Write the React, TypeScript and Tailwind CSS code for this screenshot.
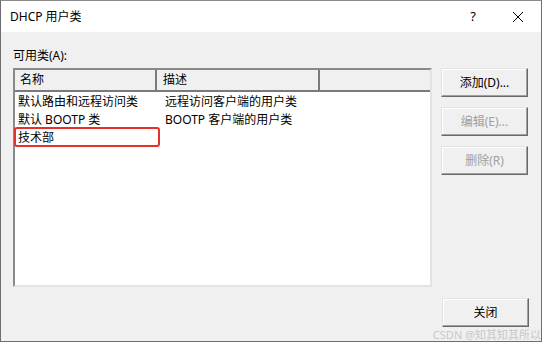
const rows = [
	{ name: '默认路由和远程访问类', desc: '远程访问客户端的用户类' },
	{ name: '默认 BOOTP 类', desc: 'BOOTP 客户端的用户类' },
	{ name: '技术部', desc: '' },
];

// classic 3D push button
const Btn = ({ label, disabled }: { label: string; disabled?: boolean }) => (
	<button
		className={`w-[87px] h-[29px] bg-[#f0f0f0] border border-t-[#e3e3e3] border-l-[#e3e3e3] border-r-[#696969] border-b-[#696969] shadow-[inset_-1px_-1px_0_#a0a0a0,inset_1px_1px_0_#ffffff] text-[12px] ${
			disabled ? 'text-[#a0a0a0]' : 'text-black'
		}`}
	>
		{label}
	</button>
);

export default function App() {
	return (
		<div
			className="w-[542px] h-[344px] bg-white text-black"
			style={{ fontFamily: '"Noto Sans", "Noto Sans CJK SC", sans-serif' }}
		>
			<div className="w-[542px] h-[342px] flex flex-col border-l border-r border-b border-t border-[#6e6e6e] border-t-[#8a8a8a] bg-[#f0f0f0]">
				{/* title bar */}
				<div className="h-[31px] bg-white flex items-center pl-[9px] shrink-0">
					<span className="text-[12px]">DHCP 用户类</span>
					<span className="ml-auto text-[13px] w-[12px] mr-[33px] text-center">?</span>
					<svg width="12" height="12" viewBox="0 0 12 12" className="mr-[17px]">
						<path d="M1 1L11 11M11 1L1 11" stroke="#000" strokeWidth="1" />
					</svg>
				</div>

				{/* body */}
				<div className="flex flex-col pt-[16px] pl-[12px] pr-[12px]">
					<div className="text-[12px] leading-[16px] mb-[4px]">可用类(A):</div>
					<div className="flex">
						{/* list view */}
						<div className="relative w-[419px] h-[219px] bg-white border-2 border-t-[#8a8a8a] border-l-[#8a8a8a] border-r-[#e3e3e3] border-b-[#e3e3e3]">
							<div className="flex h-[22px] text-[12px]">
								<div className="w-[142px] bg-[#f0f0f0] border-r-2 border-b-2 border-[#7a7a7a] flex items-center pl-[5px]">
									名称
								</div>
								<div className="w-[163px] bg-[#f0f0f0] border-r-2 border-b-2 border-[#7a7a7a] flex items-center pl-[6px]">
									描述
								</div>
								<div className="flex-1 bg-[#f0f0f0] border-b-2 border-[#7a7a7a]" />
							</div>
							<div className="pt-[1px]">
								{rows.map((r, idx) => (
									<div key={idx} className="flex h-[18px] items-center text-[12px]">
										<div className="w-[142px] pl-[3px] whitespace-nowrap">{r.name}</div>
										<div className="pl-[8px] whitespace-nowrap">{r.desc}</div>
									</div>
								))}
							</div>
							{/* red highlight around 技术部 */}
							<div className="absolute left-[-1px] top-[57px] w-[146px] h-[20px] border-2 border-[#e8302b] rounded-[3px]" />
						</div>

						{/* side buttons */}
						<div className="flex flex-col gap-[10px] ml-[9px]">
							<Btn label="添加(D)..." />
							<Btn label="编辑(E)..." disabled />
							<Btn label="删除(R)" disabled />
						</div>
					</div>

					<div className="flex justify-end mt-[11px] relative">
						<Btn label="关闭" />
						<span className="absolute right-[-12px] top-[30px] text-[11px] leading-[14px] text-[#c8c8c8] whitespace-nowrap">
							CSDN @知其知其所以
						</span>
					</div>
				</div>
			</div>
		</div>
	);
}
